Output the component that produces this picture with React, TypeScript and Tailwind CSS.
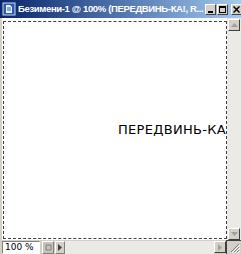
import React from "react";

function TitleButton({ children }: { children: React.ReactNode }) {
  return (
    <div className="flex h-[11px] w-[11px] items-center justify-center border border-t-white border-l-white border-r-[#404040] border-b-[#404040] bg-[#d4d0c8]">
      {children}
    </div>
  );
}

function ScrollButton({ children }: { children: React.ReactNode }) {
  return (
    <div className="flex h-[12px] w-[12px] shrink-0 items-center justify-center border border-t-white border-l-white border-r-[#404040] border-b-[#404040] bg-[#d4d0c8]">
      {children}
    </div>
  );
}

const arrow = "#a0a0a0";

export default function App() {
  return (
    <div
      className="flex h-[254px] w-[241px] flex-col bg-[#d4d0c8]"
      style={{ fontFamily: '"DejaVu Sans", "Liberation Sans", sans-serif' }}
    >
      {/* title bar */}
      <div className="flex h-[18px] shrink-0 items-center bg-gradient-to-r from-[#0a246a] to-[#a6caf0] pl-[2px] pr-[2px]">
        <svg width="14" height="14" viewBox="0 0 14 14" className="shrink-0">
          <rect x="1" y="1" width="12" height="12" fill="#2a5caa" stroke="#c8d8f0" />
          <path d="M4 3h4l2 2v6H4z" fill="#e8f0ff" />
          <path d="M5 6h4M5 8h4" stroke="#2a5caa" />
        </svg>
        <span
          className="ml-[2px] flex-1 whitespace-nowrap text-[9.5px] font-bold leading-none tracking-[-0.35px] text-white"
          style={{ fontFamily: '"Liberation Sans", Arial, sans-serif' }}
        >
          Безимени-1 @ 100% (ПЕРЕДВИНЬ-КА!, R...
        </span>
        <div className="ml-[2px] flex items-center gap-[1px]">
          <TitleButton>
            <div className="mt-[5px] h-[2px] w-[5px] bg-black" />
          </TitleButton>
          <TitleButton>
            <div className="h-[7px] w-[7px] border border-t-2 border-black" />
          </TitleButton>
          <div className="w-[1px]" />
          <TitleButton>
            <svg width="7" height="7" viewBox="0 0 7 7">
              <path d="M0.5 0.5l6 6M6.5 0.5l-6 6" stroke="black" strokeWidth="1.5" />
            </svg>
          </TitleButton>
        </div>
      </div>

      {/* canvas + vertical scrollbar */}
      <div className="flex min-h-0 flex-1">
        <div className="ml-[2px] flex min-w-0 flex-1 bg-white pt-[3px] pb-[1px] pl-[1px]">
          <div className="flex min-w-0 flex-1 items-center justify-start overflow-hidden border border-dashed border-[#404040] pb-[2px] pl-[114px]">
            <span className="whitespace-nowrap text-[13px] leading-none tracking-[0.3px] text-black">
              ПЕРЕДВИНЬ-КА!
            </span>
          </div>
        </div>
        <div className="flex w-[14px] shrink-0 flex-col bg-[#ebeae7] pt-[1px] pl-[1px] pr-[1px]">
          <ScrollButton>
            <svg width="7" height="4" viewBox="0 0 7 4">
              <path d="M3.5 0L7 4H0z" fill={arrow} />
            </svg>
          </ScrollButton>
          <div className="flex-1" />
          <ScrollButton>
            <svg width="7" height="4" viewBox="0 0 7 4">
              <path d="M0 0h7L3.5 4z" fill={arrow} />
            </svg>
          </ScrollButton>
        </div>
      </div>

      {/* bottom status row */}
      <div className="flex h-[14px] shrink-0 items-center">
        <div className="ml-[2px] flex h-[13px] w-[38px] items-center border border-t-[#808080] border-l-[#808080] border-r-white border-b-white bg-white pl-[2px] text-[9px] leading-none text-black">
          100 %
        </div>
        <div className="ml-[2px] flex h-[13px] w-[12px] items-center justify-center border border-t-white border-l-white border-r-[#808080] border-b-[#808080] bg-[#c8c4bc]">
          <svg width="7" height="7" viewBox="0 0 7 7">
            <path d="M1 6V1h5v5z" fill="none" stroke="#808080" />
          </svg>
        </div>
        <div className="ml-[1px] flex h-[13px] w-[10px] items-center justify-center border border-t-white border-l-white border-r-[#808080] border-b-[#808080] bg-[#d4d0c8]">
          <svg width="4" height="7" viewBox="0 0 4 7">
            <path d="M0 0l4 3.5L0 7z" fill="#404040" />
          </svg>
        </div>
        <div className="h-[13px] flex-1 bg-[#ebeae7]" />
        <ScrollButton>
          <svg width="4" height="7" viewBox="0 0 4 7">
            <path d="M0 0l4 3.5L0 7z" fill={arrow} />
          </svg>
        </ScrollButton>
        <div className="flex h-[14px] w-[15px] items-end justify-end border-l border-t border-[#404040] pr-[1px] pb-[1px]">
          <svg width="10" height="10" viewBox="0 0 10 10">
            <path d="M9 1L1 9M9 4L4 9M9 7L7 9" stroke="#808080" strokeWidth="1" />
            <path d="M10 2L2 10M10 5L5 10M10 8L8 10" stroke="white" strokeWidth="1" />
          </svg>
        </div>
      </div>
    </div>
  );
}
